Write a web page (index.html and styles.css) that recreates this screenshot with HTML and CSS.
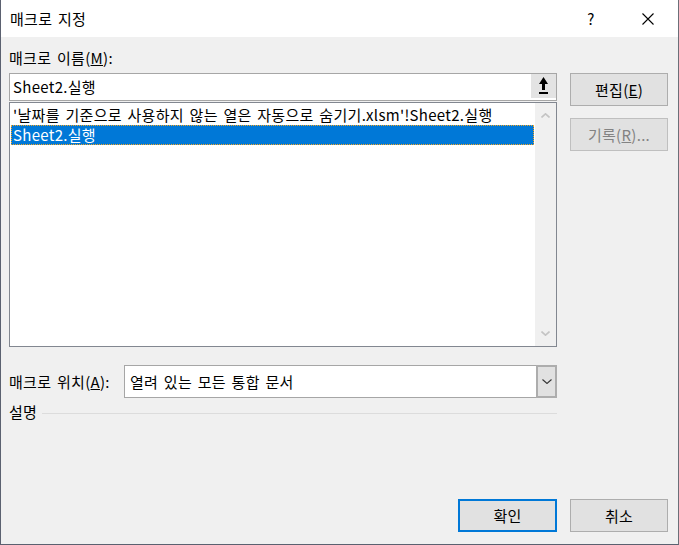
FILE: index.html
```html
<!DOCTYPE html>
<html>
<head>
    <title>매크로 지정</title>
    <link rel="stylesheet" href="styles.css">
</head>
<body>
    <div class="window">
        <div class="titlebar">
            <span class="title">매크로 지정</span>
            <span class="help">?</span>
            <span class="close">
                <svg width="12" height="12" viewBox="0 0 12 12"><path d="M0.5 0.5 L11.5 11.5 M11.5 0.5 L0.5 11.5" stroke="#000" stroke-width="1.1" fill="none"/></svg>
            </span>
        </div>
        <div class="dialog-body">
            <div class="content">
                <div class="left">
                    <div class="field-label">매크로 이름(<u>M</u>):</div>
                    <div class="name-input">
                        <span class="name-text">Sheet2.실행</span>
                        <span class="pick-btn">
                            <svg width="9" height="18" viewBox="0 0 9 18"><path d="M4.5 0 L9 7 L6 7 L6 13 L3 13 L3 7 L0 7 Z M0 15 H9 V17 H0 Z" fill="#000"/></svg>
                        </span>
                    </div>
                    <div class="list">
                        <ul class="items">
                            <li>'날짜를 기준으로 사용하지 않는 열은 자동으로 숨기기.xlsm'!Sheet2.실행</li>
                            <li class="selected">Sheet2.실행</li>
                        </ul>
                        <div class="scrollbar">
                            <svg width="9" height="5" viewBox="0 0 9 5"><polyline points="0.5,4.5 4.5,0.8 8.5,4.5" stroke="#c4c4c4" stroke-width="1.6" fill="none"/></svg>
                            <svg width="9" height="5" viewBox="0 0 9 5"><polyline points="0.5,0.5 4.5,4.2 8.5,0.5" stroke="#c4c4c4" stroke-width="1.6" fill="none"/></svg>
                        </div>
                    </div>
                    <div class="location">
                        <span class="location-label">매크로 위치(<u>A</u>):</span>
                        <div class="combo">
                            <span class="combo-text">열려 있는 모든 통합 문서</span>
                            <span class="combo-btn">
                                <svg width="10" height="5" viewBox="0 0 10 5"><polyline points="0.5,0.5 5,4.5 9.5,0.5" stroke="#333" stroke-width="1.1" fill="none"/></svg>
                            </span>
                        </div>
                    </div>
                    <div class="desc">설명</div>
                </div>
                <div class="right">
                    <button type="button" class="btn">편집(<u>E</u>)</button>
                    <button type="button" class="btn" disabled>기록(<u>R</u>)...</button>
                </div>
            </div>
            <div class="footer">
                <button type="button" class="btn btn-ok">확인</button>
                <button type="button" class="btn btn-cancel">취소</button>
            </div>
        </div>
    </div>
</body>
</html>
```

FILE: styles.css
```css
body {
    margin: 0;
    padding: 0;
    font-family: "Noto Sans CJK KR", "Noto Sans", sans-serif;
    font-size: 15px;
    line-height: 20px;
    letter-spacing: 0.3px;
    word-spacing: 2px;
    color: #000;
    background-color: #f0f0f0;
}

.window {
    width: 679px;
    height: 545px;
    box-sizing: border-box;
    border-left: 1px solid #5b6170;
    border-right: 1px solid #6b6f78;
    border-bottom: 1px solid #5b6170;
    display: flex;
    flex-direction: column;
}

.titlebar {
    height: 37px;
    background-color: #fff;
    display: flex;
    align-items: center;
    padding: 0 7px 0 9px;
}

.title {
    flex: 1;
}

.help {
    width: 46px;
    text-align: center;
}

.close {
    width: 46px;
    margin-left: 11px;
    display: flex;
    justify-content: center;
}

.dialog-body {
    flex: 1;
    display: flex;
    flex-direction: column;
    padding: 0 10px 12px 8px;
}

.content {
    display: flex;
    gap: 13px;
}

.left {
    width: 548px;
    display: flex;
    flex-direction: column;
}

.field-label {
    margin-top: 11px;
    margin-bottom: 5px;
}

.name-input {
    height: 28px;
    box-sizing: border-box;
    border: 1px solid #a6a6a6;
    background-color: #fff;
    display: flex;
    align-items: center;
    padding-left: 3px;
}

.name-text {
    flex: 1;
}

.pick-btn {
    width: 25px;
    height: 24px;
    background-color: #e3e3e3;
    display: flex;
    align-items: center;
    justify-content: center;
    align-self: flex-start;
}

.list {
    margin-top: 1px;
    height: 245px;
    box-sizing: border-box;
    border: 1px solid #828790;
    background-color: #fff;
    display: flex;
}

.items {
    flex: 1;
    list-style: none;
    margin: 0;
    padding: 2px 1px 0 1px;
}

.items li {
    height: 20px;
    padding-left: 2px;
    white-space: nowrap;
}

.items li.selected {
    background-color: #0078d7;
    color: #fff;
    outline: 1px dotted #f5a623;
    outline-offset: -1px;
}

.scrollbar {
    width: 21px;
    background-color: #f0f0f0;
    display: flex;
    flex-direction: column;
    justify-content: space-between;
    align-items: center;
    padding: 10px 0;
    box-sizing: border-box;
}

.location {
    margin-top: 18px;
    display: flex;
    align-items: center;
}

.location-label {
    width: 115px;
}

.combo {
    flex: 1;
    height: 33px;
    box-sizing: border-box;
    border: 1px solid #a6a6a6;
    background-color: #fff;
    display: flex;
    align-items: center;
    padding-left: 5px;
}

.combo-text {
    flex: 1;
}

.combo-btn {
    width: 21px;
    height: 33px;
    margin: -1px -1px -1px 0;
    box-sizing: border-box;
    border: 2px solid #adadad;
    background-color: #e1e1e1;
    display: flex;
    align-items: center;
    justify-content: center;
}

.desc {
    margin-top: 4px;
    display: flex;
    align-items: center;
    gap: 5px;
}

.desc::after {
    content: "";
    flex: 1;
    height: 1px;
    background-color: #dcdcdc;
    margin-top: 2px;
}

.right {
    width: 98px;
    padding-top: 36px;
    display: flex;
    flex-direction: column;
    gap: 12px;
}

.btn {
    height: 33px;
    box-sizing: border-box;
    border: 1px solid #adadad;
    background-color: #e1e1e1;
    font-family: inherit;
    font-size: 15px;
    letter-spacing: inherit;
    color: #000;
    padding: 0;
}

.btn:disabled {
    color: #838383;
    border-color: #bfbfbf;
}

.footer {
    margin-top: auto;
    display: flex;
    justify-content: flex-end;
    gap: 13px;
}

.btn-ok {
    width: 99px;
    border: 2px solid #0078d7;
}

.btn-cancel {
    width: 98px;
}
```
